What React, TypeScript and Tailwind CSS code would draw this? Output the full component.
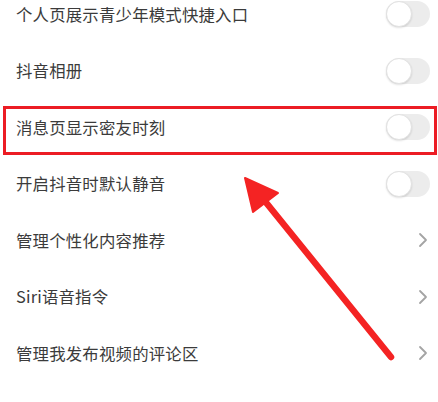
type Row = { label: string; kind: "toggle" | "link" };

const rows: Row[] = [
  { label: "个人页展示青少年模式快捷入口", kind: "toggle" },
  { label: "抖音相册", kind: "toggle" },
  { label: "消息页显示密友时刻", kind: "toggle" },
  { label: "开启抖音时默认静音", kind: "toggle" },
  { label: "管理个性化内容推荐", kind: "link" },
  { label: "Siri语音指令", kind: "link" },
  { label: "管理我发布视频的评论区", kind: "link" },
  { label: "隐私设置与个性化推荐", kind: "link" },
];

const Toggle = () => (
  <div className="relative h-[26px] w-[44px] rounded-full bg-[#ececec]">
    <div className="absolute left-0 top-0 h-[26px] w-[26px] rounded-full border border-[#e2e2e2] bg-white shadow-[0_1px_2px_rgba(0,0,0,0.12)]" />
  </div>
);

const Chevron = () => (
  <svg width="10" height="16" viewBox="0 0 10 16" className="mr-[2px]">
    <path d="M2 2 L8 8 L2 14" fill="none" stroke="#a4a4a4" strokeWidth="1.8" strokeLinecap="round" strokeLinejoin="round" />
  </svg>
);

const App = () => {
  return (
    <div
      className="relative h-[402px] w-[438px] overflow-hidden bg-white"
      style={{ fontFamily: '"Noto Sans CJK SC", "Noto Sans", sans-serif' }}
    >
      {/* settings list */}
      <div className="-mt-[14px] flex flex-col">
        {rows.map((row) => (
          <div key={row.label} className="flex h-[56.5px] items-center justify-between pl-4 pr-2">
            <span className="text-[16.4px] tracking-[0.2px] text-[#3b3b3b]">{row.label}</span>
            {row.kind === "toggle" ? <Toggle /> : <Chevron />}
          </div>
        ))}
      </div>

      {/* highlight box */}
      <div className="absolute left-[3px] top-[106px] h-[49px] w-[434px] border-[3px] border-[#ec1c24]" />

      {/* annotation arrow */}
      <svg className="absolute left-0 top-0" width="438" height="402" viewBox="0 0 438 402">
        <line x1="391" y1="357" x2="264" y2="200" stroke="#f42323" strokeWidth="6.5" strokeLinecap="round" />
        <polygon points="245,178 253,212 278,193" fill="#f42323" strokeLinejoin="round" stroke="#f42323" strokeWidth="2" />
      </svg>
    </div>
  );
};

export default App;
